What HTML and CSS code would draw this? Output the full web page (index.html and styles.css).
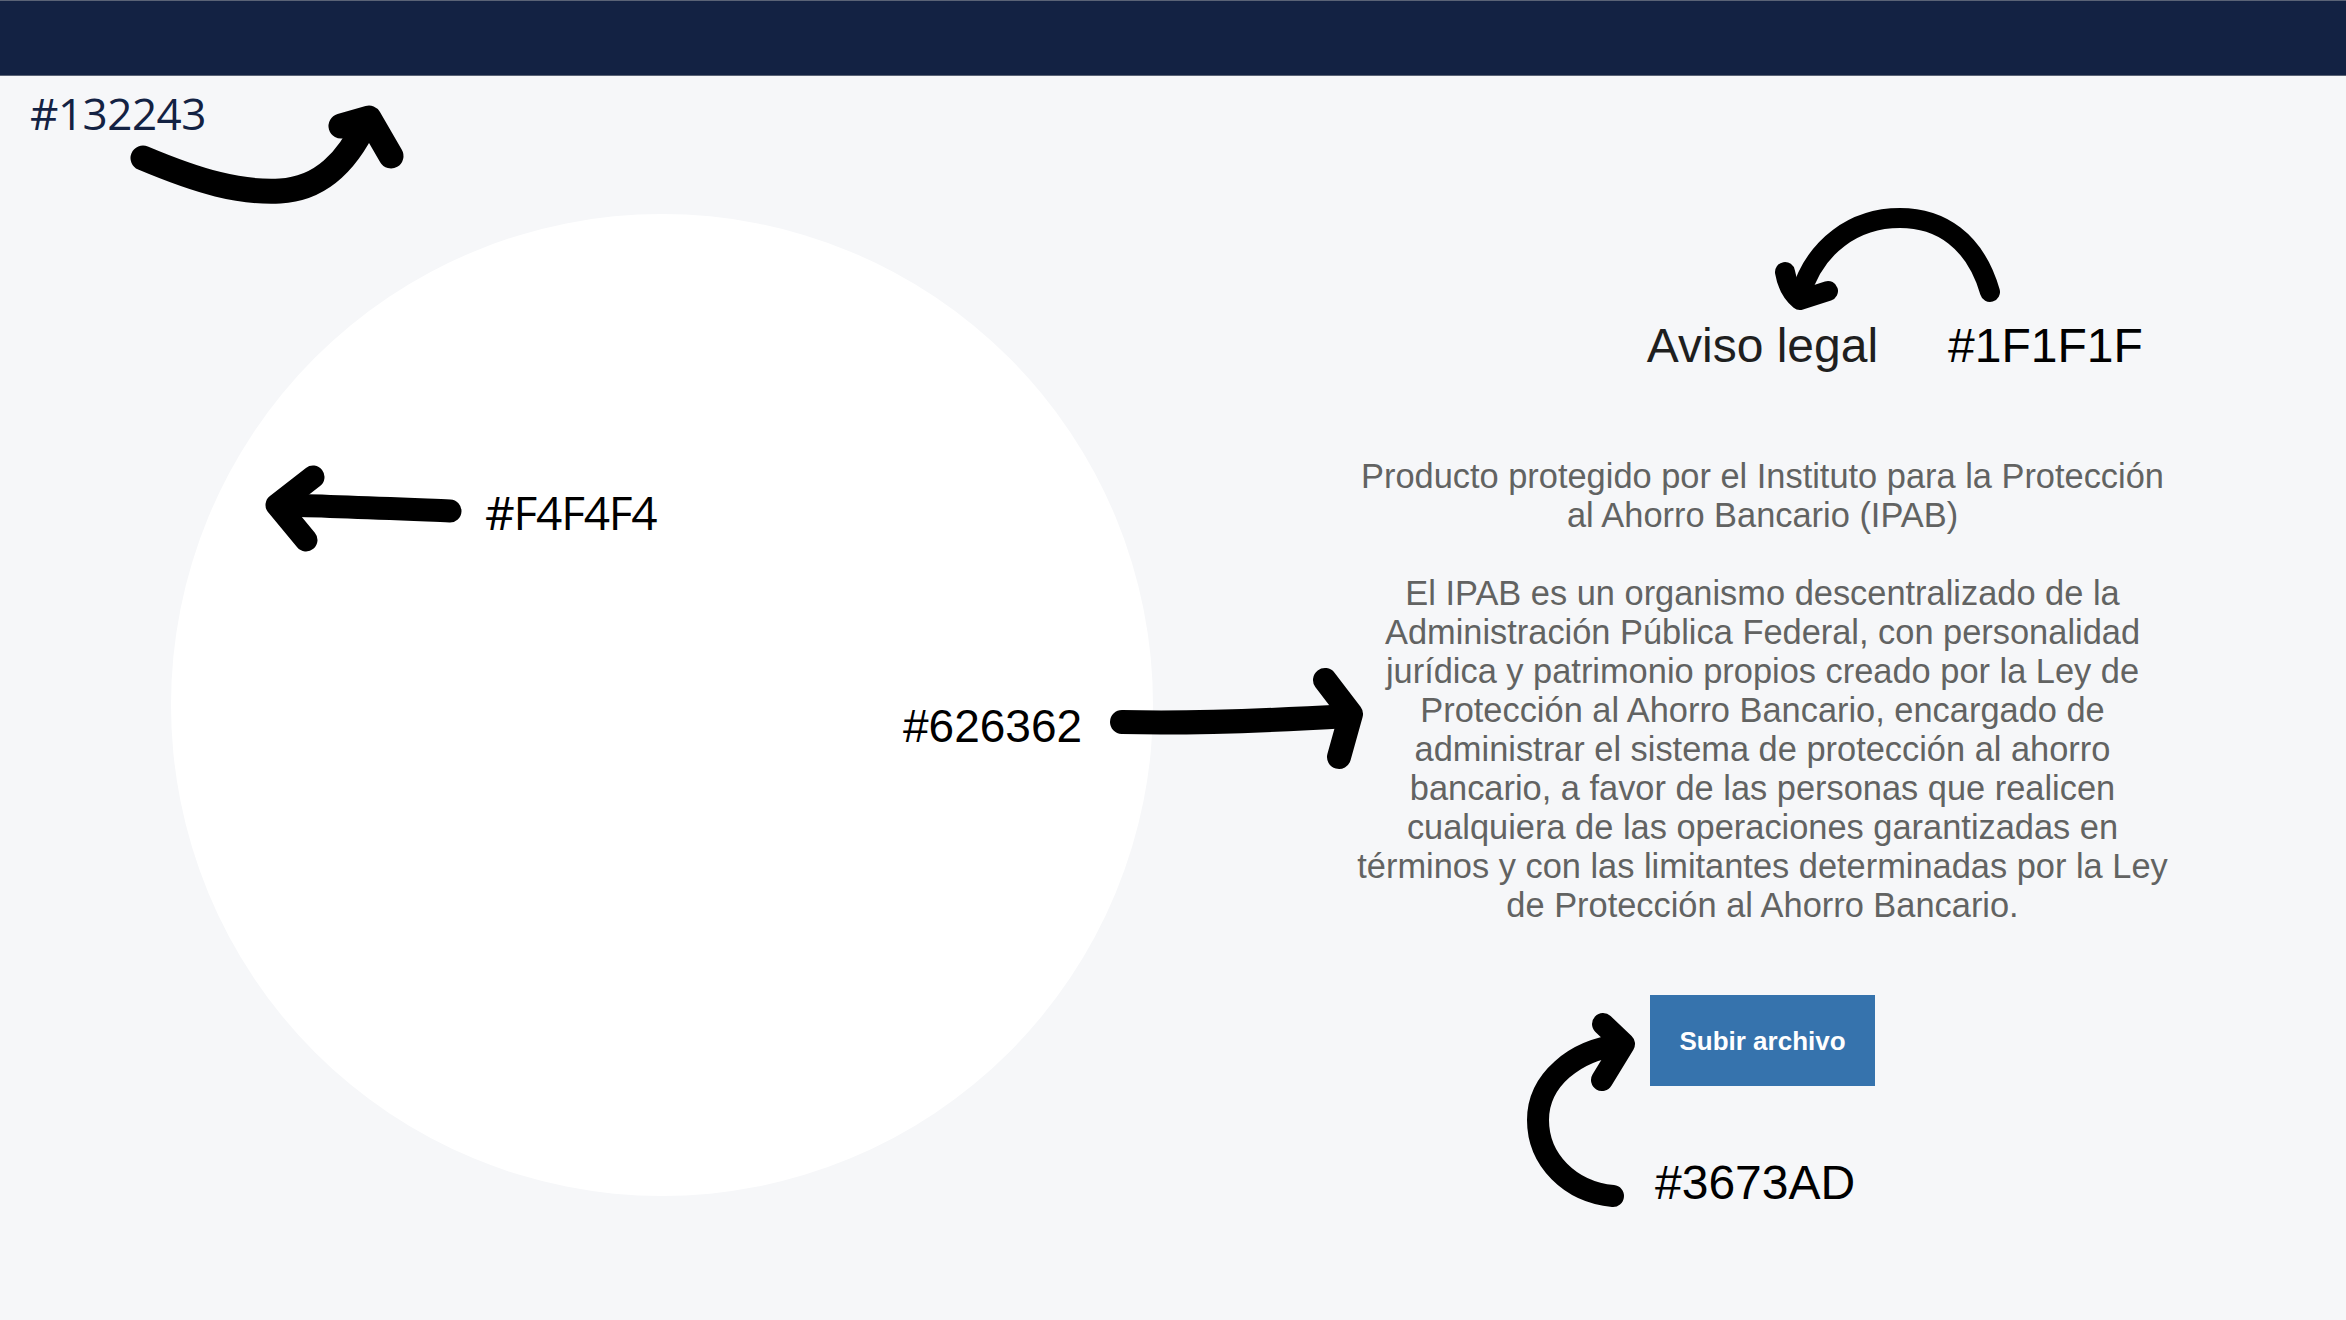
FILE: index.html
```html
<!DOCTYPE html>
<html lang="es">
<head>
<meta charset="utf-8">
<title>Aviso legal</title>
<link rel="stylesheet" href="styles.css">
</head>
<body>
<div class="page">
  <header class="topbar"></header>
  <main class="main">
    <div class="left">
      <div class="circle"></div>
    </div>
    <section class="right">
      <h1 class="title">Aviso legal</h1>
      <div class="legal">
        <p>Producto protegido por el Instituto para la Protección al Ahorro Bancario (IPAB)</p>
        <p class="gap">El IPAB es un organismo descentralizado de la Administración Pública Federal, con personalidad jurídica y patrimonio propios creado por la Ley de Protección al Ahorro Bancario, encargado de administrar el sistema de protección al ahorro bancario, a favor de las personas que realicen cualquiera de las operaciones garantizadas en términos y con las limitantes determinadas por la Ley de Protección al Ahorro Bancario.</p>
      </div>
      <button class="upload" type="button">Subir archivo</button>
    </section>
  </main>

  <div class="note note-navy">#132243</div>
  <div class="note note-f4">#F4F4F4</div>
  <div class="note-arial note-626">#626362</div>
  <div class="note-arial note-1f">#1F1F1F</div>
  <div class="note-arial note-367">#3673AD</div>

  <svg class="arrows" viewBox="0 0 2346 1320" width="2346" height="1320" aria-hidden="true">
    <g fill="none" stroke="#000" stroke-linecap="round" stroke-linejoin="round">
      <g stroke-width="25">
        <path d="M143,158 C200,182 240,193 280,191 C322,189 348,160 366,122"/>
        <path d="M341,126 L369,118 L391,156"/>
      </g>
      <g stroke-width="23">
        <path d="M450,511 C400,509 330,506 282,505"/>
        <path d="M313,477 L277,505 L306,540"/>
      </g>
      <g stroke-width="24">
        <path d="M1122,722 C1200,724 1280,720 1348,716"/>
        <path d="M1325,680 L1351,714 L1339,757"/>
      </g>
      <g stroke-width="20">
        <path d="M1990,292 C1975,240 1940,218 1900,218 C1855,218 1815,245 1800,296"/>
        <path d="M1785,272 Q1788,290 1800,300 L1828,291"/>
      </g>
      <g stroke-width="22">
        <path d="M1613,1196 C1570,1192 1538,1160 1538,1120 C1538,1080 1575,1050 1620,1045"/>
        <path d="M1603,1024 L1624,1044 L1602,1080"/>
      </g>
    </g>
  </svg>
</div>
</body>
</html>
```

FILE: styles.css
```css
html, body {
  margin: 0;
  padding: 0;
}

body {
  background: #f6f7f9;
  width: 2346px;
  height: 1320px;
  overflow: hidden;
  font-family: "Liberation Sans", Arial, sans-serif;
}

.page {
  position: relative;
  width: 2346px;
  height: 1320px;
}

.topbar {
  height: 74px;
  background: #132243;
  border-top: 1px solid #5a6376;
  border-bottom: 1px solid #5a6376;
  box-sizing: content-box;
}

.main {
  display: flex;
  align-items: flex-start;
}

.left {
  padding-top: 138px;
  padding-left: 171px;
}

.circle {
  width: 982px;
  height: 982px;
  border-radius: 50%;
  background: #ffffff;
}

.right {
  flex: 1;
  padding-left: 26px;
  padding-top: 242px;
  display: flex;
  flex-direction: column;
  align-items: center;
}

.title {
  margin: 0;
  font-size: 48px;
  line-height: 56px;
  font-weight: 400;
  color: #1f1f1f;
}

.legal {
  margin-top: 83px;
  width: 820px;
  text-align: center;
  color: #626362;
  font-size: 34.4px;
  line-height: 39px;
}

.legal p {
  margin: 0;
}

.legal .gap {
  margin-top: 39px;
}

.upload {
  margin-top: 70px;
  height: 91px;
  padding: 0 29px;
  border: none;
  border-radius: 0;
  background: #3673ad;
  color: #ffffff;
  font-family: "Liberation Sans", Arial, sans-serif;
  font-weight: 700;
  font-size: 26px;
  line-height: 30px;
  display: flex;
  align-items: center;
  justify-content: center;
}

.note {
  position: absolute;
  font-family: "Open Sans", "Noto Sans", sans-serif;
  line-height: 1;
  white-space: nowrap;
}

.note-navy {
  left: 30px;
  top: 91px;
  font-size: 44px;
  letter-spacing: -0.5px;
  color: #132243;
}

.note-f4 {
  left: 485px;
  top: 489px;
  font-size: 46px;
  letter-spacing: -1.2px;
  color: #000000;
}

.note-arial {
  position: absolute;
  font-family: "Liberation Sans", Arial, sans-serif;
  line-height: 1;
  white-space: nowrap;
  color: #000000;
}

.note-626 {
  left: 903px;
  top: 703px;
  font-size: 46px;
}

.note-1f {
  left: 1948px;
  top: 322px;
  font-size: 48px;
}

.note-367 {
  left: 1655px;
  top: 1159px;
  font-size: 48px;
}

.arrows {
  position: absolute;
  left: 0;
  top: 0;
  pointer-events: none;
}
```
